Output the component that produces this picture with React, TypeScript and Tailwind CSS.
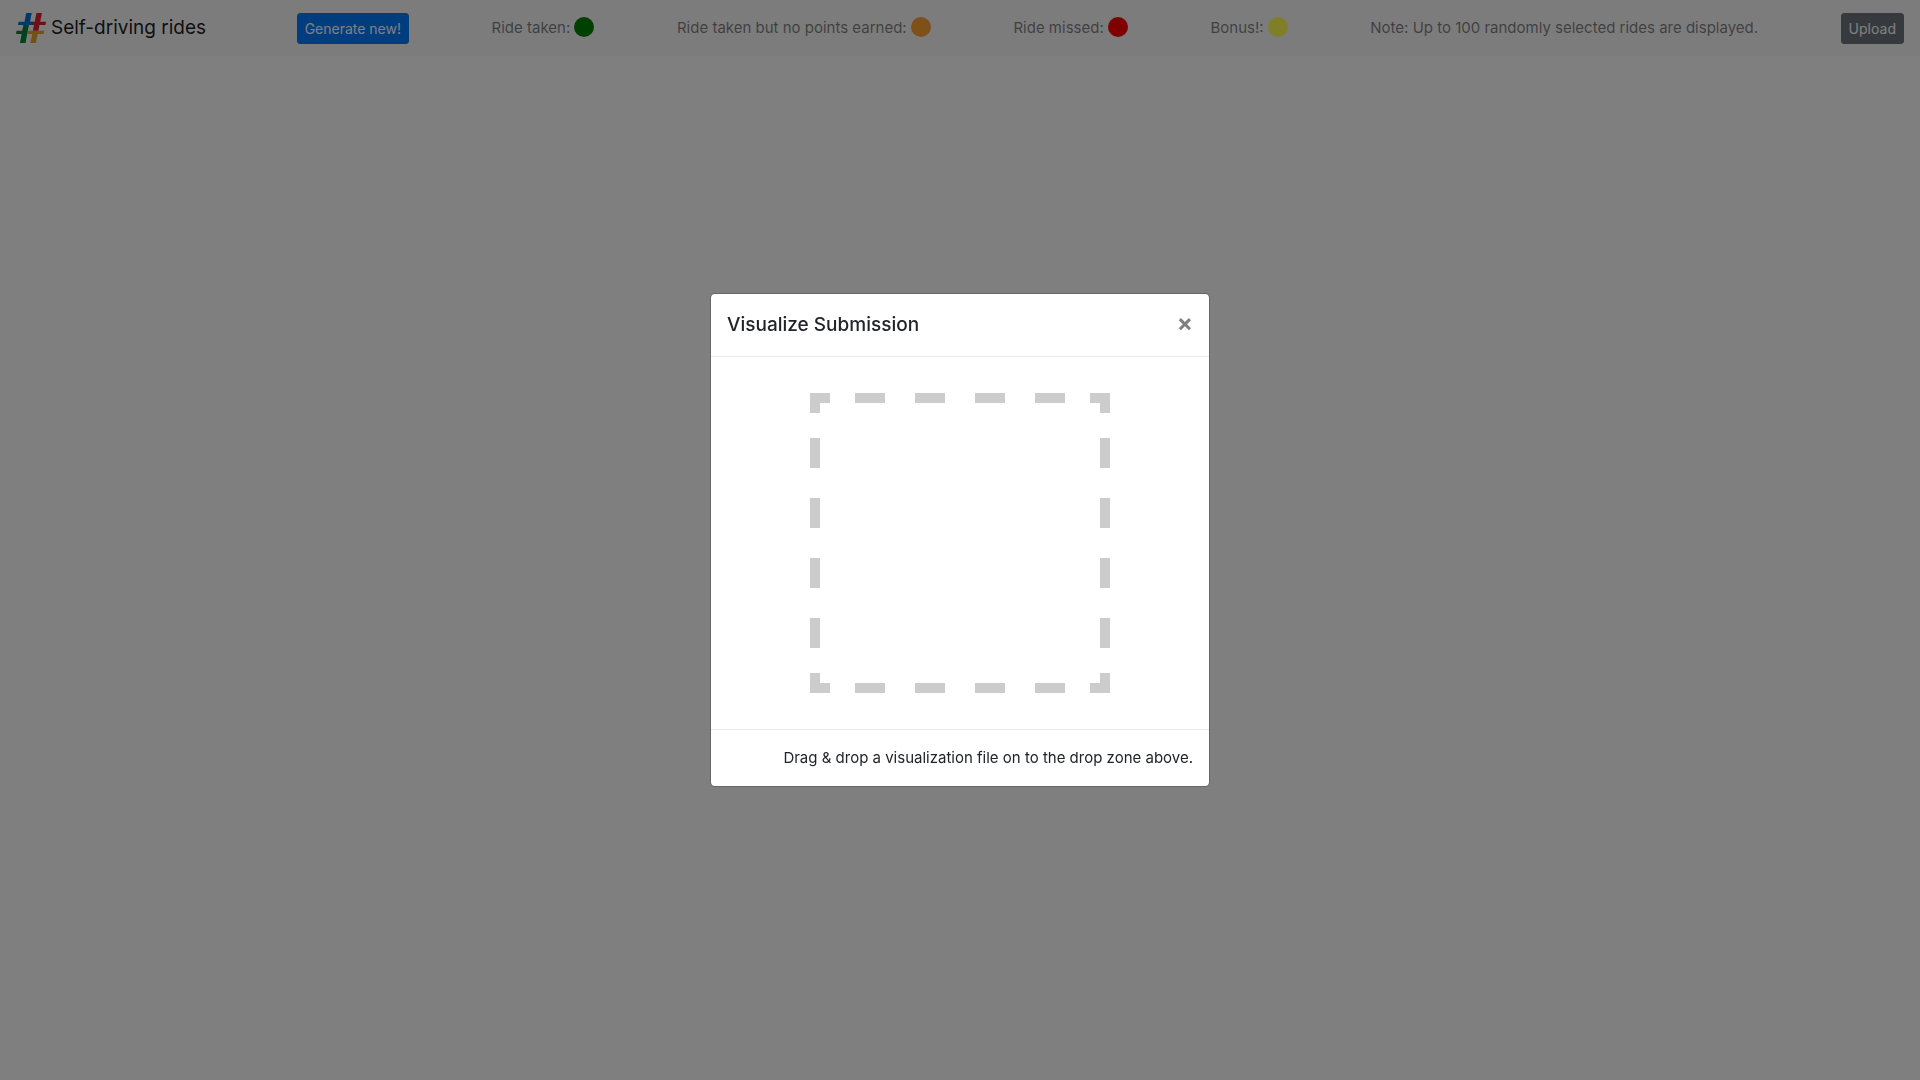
const legend = [
  { label: 'Ride taken:', color: 'bg-[#008000]' },
  { label: 'Ride taken but no points earned:', color: 'bg-[#ffa031]' },
  { label: 'Ride missed:', color: 'bg-[#ff0000]' },
  { label: 'Bonus!:', color: 'bg-[#ffff50]' },
];

function HashLogo() {
  return (
    <svg viewBox="0 0 30 30" className="size-[30px]" aria-hidden="true">
      <path fill="#00843f" d="M7.4 12H12.9L9.5 30H4L5.6 21H0L.6 17.8H6.2Z" />
      <path fill="#e5a52d" d="M12 17.8H28.3L27.7 21H21.7L19.9 30H14.4L16.2 21H11.4Z" />
      <path fill="#d92231" d="M20.4 0H25.9L24.2 8.8H30L29.4 12H23.5L22.4 17.8H16.8L18 12H14L14.6 8.8H18.7Z" />
      <path fill="#0072ce" d="M10.2 0H15.7L14 8.8H17L16.4 12H2L2.6 8.8H8.5Z" />
    </svg>
  );
}

function DropZone() {
  return (
    <svg viewBox="0 0 300 300" className="size-[300px]" role="img" aria-label="Drop zone">
      <g stroke="#cccccc" strokeWidth="10" strokeDasharray="20 25 30 30 30 30 30 30 30 25 20 0">
        <path d="M0 5H300" />
        <path d="M0 295H300" />
        <path d="M5 0V300" />
        <path d="M295 0V300" />
      </g>
    </svg>
  );
}

export default function App() {
  return (
    <div className="min-h-screen bg-white font-['Inter',sans-serif] text-[15px] leading-6 text-[#212529]">
      <nav className="flex min-h-14 items-center justify-between bg-[#f8f9fa] px-4 whitespace-nowrap">
        <a href="#" className="mr-2 flex items-center gap-[5px] text-[19px] leading-[30px] text-black/90">
          <HashLogo />
          Self-driving rides
        </a>
        <button type="button" className="rounded-[3px] border border-[#007bff] bg-[#007bff] px-[7px] py-1 text-sm leading-[21px] text-white">
          Generate new!
        </button>
        {legend.map((item) => (
          <span key={item.label} className="text-black/50">
            {item.label}{' '}
            <span className={`inline-block size-5 rounded-full align-text-bottom ${item.color}`} />
          </span>
        ))}
        <span className="text-black/50">Note: Up to 100 randomly selected rides are displayed.</span>
        <button type="button" className="rounded-[3px] border border-[#6c757d] bg-[#6c757d] px-[7px] py-1 text-sm leading-[21px] text-white">
          Upload
        </button>
      </nav>

      <div className="fixed inset-0 flex items-center justify-center bg-black/50">
        <div
          role="dialog"
          aria-modal="true"
          aria-labelledby="dialog-title"
          className="w-full max-w-[500px] rounded-[5px] border border-black/20 bg-white bg-clip-padding"
        >
          <header className="flex items-center justify-between border-b border-[#e9ecef] p-4">
            <h5 id="dialog-title" className="text-[19px] leading-[30px] font-medium">Visualize Submission</h5>
            <button type="button" aria-label="Close" className="self-start text-2xl leading-[26px] font-bold text-black/50">
              ×
            </button>
          </header>
          <div className="flex justify-center px-4 py-9">
            <DropZone />
          </div>
          <footer className="flex justify-end border-t border-[#e9ecef] p-4">
            <p>Drag &amp; drop a visualization file on to the drop zone above.</p>
          </footer>
        </div>
      </div>
    </div>
  );
}
